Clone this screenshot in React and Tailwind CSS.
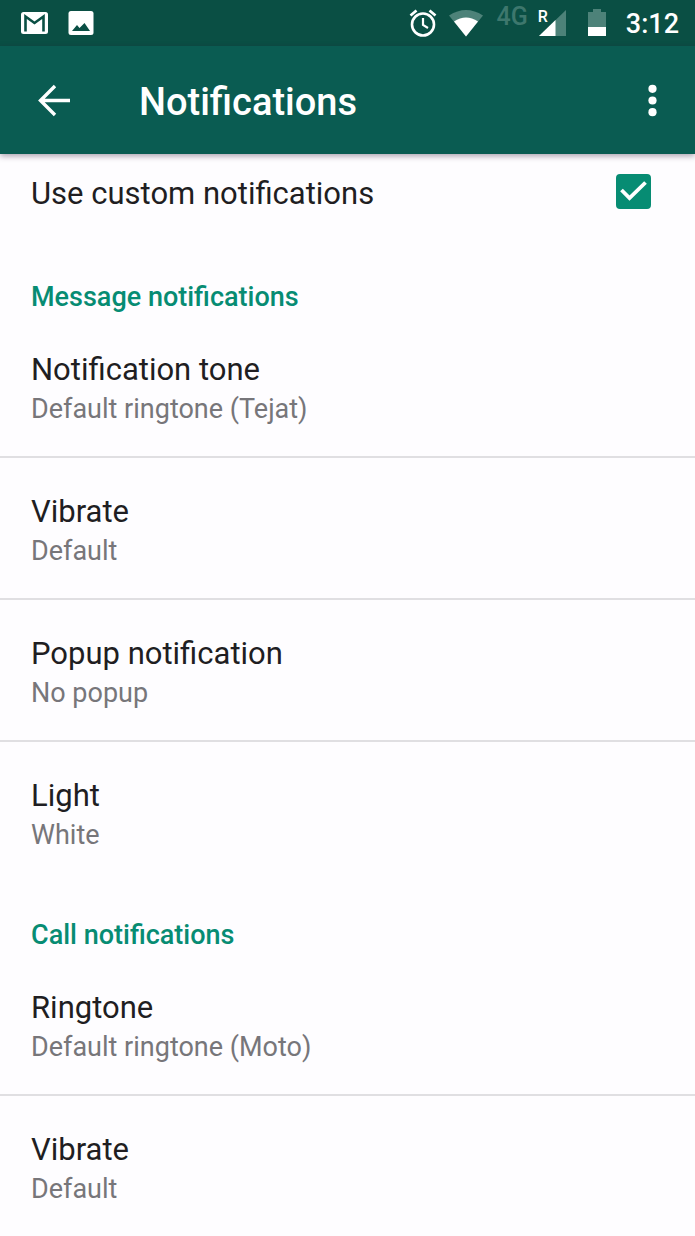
import React, { useState } from 'react';

const messageSettings = [
  { title: 'Notification tone', value: 'Default ringtone (Tejat)' },
  { title: 'Vibrate', value: 'Default' },
  { title: 'Popup notification', value: 'No popup' },
  { title: 'Light', value: 'White' },
];

const callSettings = [
  { title: 'Ringtone', value: 'Default ringtone (Moto)' },
  { title: 'Vibrate', value: 'Default' },
];

const StatusBar = () => (
  <div className="h-[46px] px-4 flex items-center justify-between bg-[#0a4f44] text-white">
    <div className="flex items-center gap-5 pl-1">
      {/* Mail */}
      <svg className="w-7 h-6" viewBox="0 0 28 24">
        <rect x="1" y="1" width="27" height="22" rx="2.5" fill="white" />
        <path d="M5.500 20.500V5.500L14.500 12L23.500 5.500V20.500" fill="none" stroke="#0a4f44" strokeWidth="2.600" />
      </svg>
      {/* Picture */}
      <svg className="w-[26px] h-6" viewBox="0 0 26 24">
        <rect x="0.500" y="0" width="25" height="24" rx="2.500" fill="white" />
        <path d="M4 20L9 14L11.500 17L16.500 12L22 20Z" fill="#0a4f44" />
      </svg>
    </div>

    <div className="flex items-center">
      {/* Alarm */}
      <svg className="w-7 h-7" viewBox="0 0 28 28" fill="none" stroke="white">
        <circle cx="14" cy="15.500" r="11" strokeWidth="2.600" />
        <path d="M14 9V16L19 19" strokeWidth="2.200" />
        <path d="M1.500 6.500L7.500 1.500M20.500 1.500L26.500 6.500" strokeWidth="2.800" />
      </svg>
      {/* Wifi */}
      <svg className="w-[34px] h-7 ml-3" viewBox="0 0 34 28">
        <path d="M0 6.500Q17 -4.500 34 6.500L17 27.500Z" fill="#4d8279" />
        <path d="M5 12.500Q17 4.500 29 12.500L17 27.500Z" fill="white" />
      </svg>
      <span className="ml-3.5 mb-3 text-[25px] leading-6 font-medium text-[#3d776d]">4G</span>
      {/* Roaming signal */}
      <div className="relative ml-2.5 w-7 h-7">
        <svg className="w-7 h-7" viewBox="0 0 28 28">
          <path d="M28 1V27H1Z" fill="#4d8279" />
          <path d="M17.500 11V27H1Z" fill="white" />
        </svg>
        <span className="absolute left-0 top-0 text-base leading-4 font-medium">R</span>
      </div>
      {/* Battery */}
      <svg className="w-[18px] h-7 ml-[22px]" viewBox="0 0 18 28">
        <path d="M0 3H5V0H13V3H18V18H0Z" fill="#4d8279" />
        <path d="M0 18H18V27H0Z" fill="white" />
      </svg>
      <span className="ml-5 pt-0.5 text-[27px] leading-8 font-medium">3:12</span>
    </div>
  </div>
);

const AppBar = () => (
  <header className="relative h-[108px] pl-9 pr-6 flex items-center bg-[#0a5c52] text-white shadow-[0_2px_6px_rgba(40,20,50,0.4)]">
    <button type="button" aria-label="Back" className="w-9 h-9">
      <svg className="w-9 h-9" viewBox="0 0 36 36" fill="none" stroke="white" strokeWidth="3.400">
        <path d="M34 18.500H5M19 4L4.500 18.500L19 33" />
      </svg>
    </button>
    <h1 className="flex-1 ml-[67px] pt-1 text-[38px] leading-[48px] font-medium">Notifications</h1>
    <button type="button" aria-label="More options" className="w-9 h-9">
      <svg className="w-9 h-9" viewBox="0 0 36 36" fill="white">
        <circle cx="17.500" cy="6.800" r="4.100" />
        <circle cx="17.500" cy="18.500" r="4.100" />
        <circle cx="17.500" cy="30.200" r="4.100" />
      </svg>
    </button>
  </header>
);

const SettingRow = ({ title, value }) => (
  <li className="border-b-2 border-[#e0dfe2] last:border-transparent">
    <button type="button" className="block w-full px-[31px] pt-[34px] pb-7 text-left">
      <span className="block text-[31px] leading-10 text-[#1f1e22]">{title}</span>
      <span className="block text-[27px] leading-[38px] text-[#77767a]">{value}</span>
    </button>
  </li>
);

const SettingSection = ({ heading, items }) => (
  <section>
    <h2 className="px-[31px] pt-8 text-[27px] leading-[38px] font-medium text-[#078c73]">{heading}</h2>
    <ul>
      {items.map((item) => (
        <SettingRow key={item.title} title={item.title} value={item.value} />
      ))}
    </ul>
  </section>
);

const App = () => {
  const [custom, setCustom] = useState(true);

  return (
    <div className="min-h-screen bg-[#fefdff] font-['Roboto',sans-serif]">
      <StatusBar />
      <AppBar />
      <main>
        <label className="flex items-start justify-between pl-[31px] pr-11 pt-5 pb-8">
          <span className="text-[31px] leading-10 text-[#1f1e22]">Use custom notifications</span>
          <span className="relative w-[35px] h-[35px]">
            <input
              type="checkbox"
              checked={custom}
              onChange={(e) => setCustom(e.target.checked)}
              className="block w-full h-full appearance-none rounded-sm border-3 border-[#77767a] checked:border-[#078c73] checked:bg-[#078c73]"
            />
            {custom && (
              <svg className="absolute inset-0 w-full h-full pointer-events-none" viewBox="0 0 35 35" fill="none" stroke="white" strokeWidth="3.800">
                <path d="M5.500 16L13.500 24L29.500 8.500" />
              </svg>
            )}
          </span>
        </label>
        <SettingSection heading="Message notifications" items={messageSettings} />
        <SettingSection heading="Call notifications" items={callSettings} />
      </main>
    </div>
  );
};

export default App;
